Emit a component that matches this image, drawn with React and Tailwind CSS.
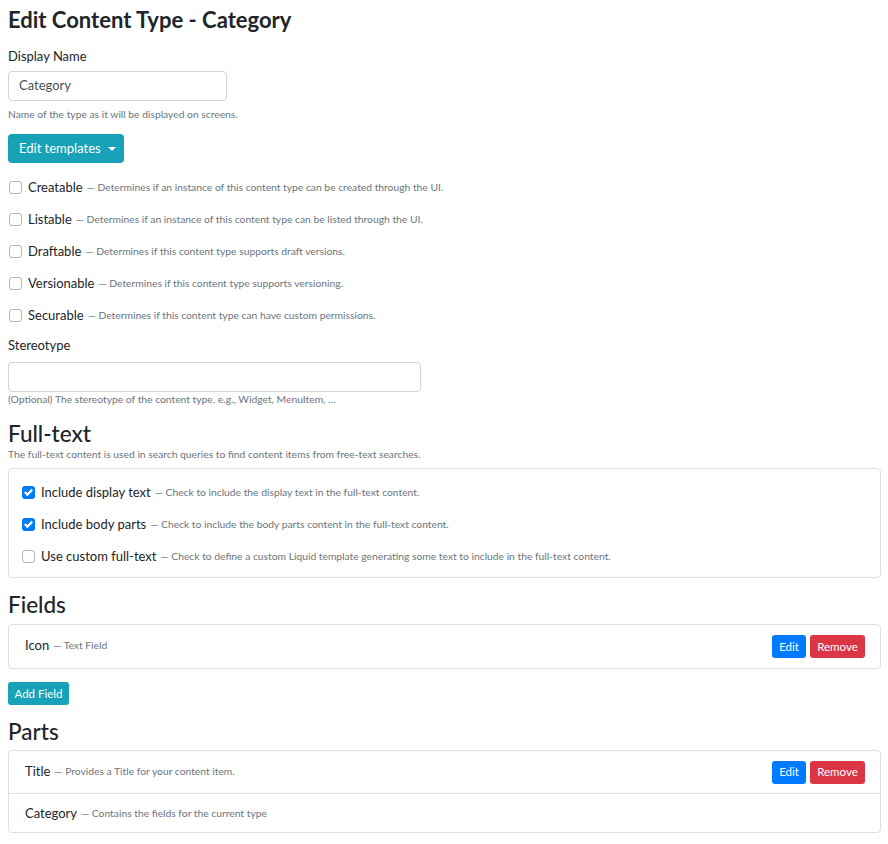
import React from "react";

const font = { fontFamily: "Lato, 'Liberation Sans', sans-serif" };

function Box({ checked }) {
  if (checked) {
    return (
      <span className="inline-flex h-[13px] w-[13px] shrink-0 items-center justify-center rounded-[3px] bg-[#007bff]">
        <svg width="9" height="9" viewBox="0 0 8 8">
          <path d="M6.564.75l-3.59 3.612-1.538-1.55L0 4.26l2.974 2.99L8 2.193z" fill="#fff" />
        </svg>
      </span>
    );
  }
  return <span className="inline-block h-[13px] w-[13px] shrink-0 rounded-[3px] border border-[#adb5bd] bg-white" />;
}

function CheckRow({ label, desc, checked }) {
  return (
    <div className="flex h-[20px] items-center">
      <Box checked={checked} />
      <span className="ml-[6px] pt-[1px] text-[13px] text-[#212529]">{label}</span>
      <span className="ml-[4px] pt-[1px] text-[10.3px] text-[#6c757d]">— {desc}</span>
    </div>
  );
}

function Btns() {
  return (
    <div className="flex gap-[4px]">
      <span className="flex h-[23px] w-[34px] items-center justify-center rounded-[3px] bg-[#007bff] text-[11.5px] text-white">Edit</span>
      <span className="flex h-[23px] w-[55px] items-center justify-center rounded-[3px] bg-[#dc3545] text-[11.5px] text-white">Remove</span>
    </div>
  );
}

function ListRow({ name, desc, buttons, border }) {
  return (
    <div className={"flex h-[43px] items-center justify-between pl-[16px] pr-[15px] " + (border ? "border-b border-[#dfdfdf]" : "")}>
      <div className="flex items-center pb-[1px]">
        <span className="text-[13px] text-[#212529]">{name}</span>
        <span className="ml-[4px] text-[10.3px] text-[#6c757d]">— {desc}</span>
      </div>
      {buttons && <Btns />}
    </div>
  );
}

export default function App() {
  return (
    <div style={font} className="min-h-[844px] bg-white pl-[8px] pr-[7px] pt-[5px] text-[#212529]">
      <h1 className="h-[29px] text-[22px] font-bold leading-[29px]">Edit Content Type - Category</h1>

      <div className="mt-[12px] h-[21px] text-[13px] leading-[21px]">Display Name</div>
      <div className="mt-[4px] flex h-[30px] w-[219px] items-center rounded-[4px] border border-[#ced4da] px-[10px] text-[13px] text-[#495057]">
        Category
      </div>
      <div className="mt-[6px] h-[15px] text-[10.3px] leading-[15px] text-[#6c757d]">
        Name of the type as it will be displayed on screens.
      </div>

      <div className="mt-[12px] flex h-[29px] w-[116px] items-center rounded-[4px] bg-[#17a2b8] pl-[11px] text-[13px] text-white">
        Edit templates
        <span className="ml-[7px] inline-block h-0 w-0 border-x-[4px] border-t-[4px] border-x-transparent border-t-white" />
      </div>

      <div className="mt-[14px] flex flex-col gap-[12px] pl-[1px]">
        <CheckRow label="Creatable" desc="Determines if an instance of this content type can be created through the UI." />
        <CheckRow label="Listable" desc="Determines if an instance of this content type can be listed through the UI." />
        <CheckRow label="Draftable" desc="Determines if this content type supports draft versions." />
        <CheckRow label="Versionable" desc="Determines if this content type supports versioning." />
        <CheckRow label="Securable" desc="Determines if this content type can have custom permissions." />
      </div>

      <div className="mt-[10px] h-[21px] text-[13px] leading-[21px]">Stereotype</div>
      <div className="mt-[6px] h-[30px] w-[413px] rounded-[4px] border border-[#ced4da]" />
      <div className="h-[15px] text-[10.3px] leading-[15px] text-[#6c757d]">
        (Optional) The stereotype of the content type. e.g., Widget, MenuItem, ...
      </div>

      <h3 className="mt-[14px] h-[26px] text-[22.5px] font-medium leading-[26px]">Full-text</h3>
      <div className="h-[15px] text-[10.3px] leading-[15px] text-[#6c757d]">
        The full-text content is used in search queries to find content items from free-text searches.
      </div>
      <div className="mt-[6px] flex flex-col gap-[12px] rounded-[4px] border border-[#dfdfdf] pb-[11px] pl-[13px] pt-[13px]">
        <CheckRow checked label="Include display text" desc="Check to include the display text in the full-text content." />
        <CheckRow checked label="Include body parts" desc="Check to include the body parts content in the full-text content." />
        <CheckRow label="Use custom full-text" desc="Check to define a custom Liquid template generating some text to include in the full-text content." />
      </div>

      <h3 className="mt-[14px] h-[26px] text-[22.5px] font-medium leading-[26px]">Fields</h3>
      <div className="mt-[6px] rounded-[4px] border border-[#dfdfdf]">
        <ListRow name="Icon" desc="Text Field" buttons />
      </div>
      <div className="mt-[13px] flex h-[23px] w-[61px] items-center justify-center rounded-[3px] bg-[#17a2b8] text-[11.5px] text-white">
        Add Field
      </div>

      <h3 className="mt-[14px] h-[26px] text-[22.5px] font-medium leading-[26px]">Parts</h3>
      <div className="mt-[5px] rounded-[4px] border border-[#dfdfdf]">
        <ListRow name="Title" desc="Provides a Title for your content item." buttons border />
        <div className="flex h-[38px] items-center pl-[16px] pt-[2px]">
          <span className="text-[13px] text-[#212529]">Category</span>
          <span className="ml-[4px] text-[10.3px] text-[#6c757d]">— Contains the fields for the current type</span>
        </div>
      </div>
    </div>
  );
}
